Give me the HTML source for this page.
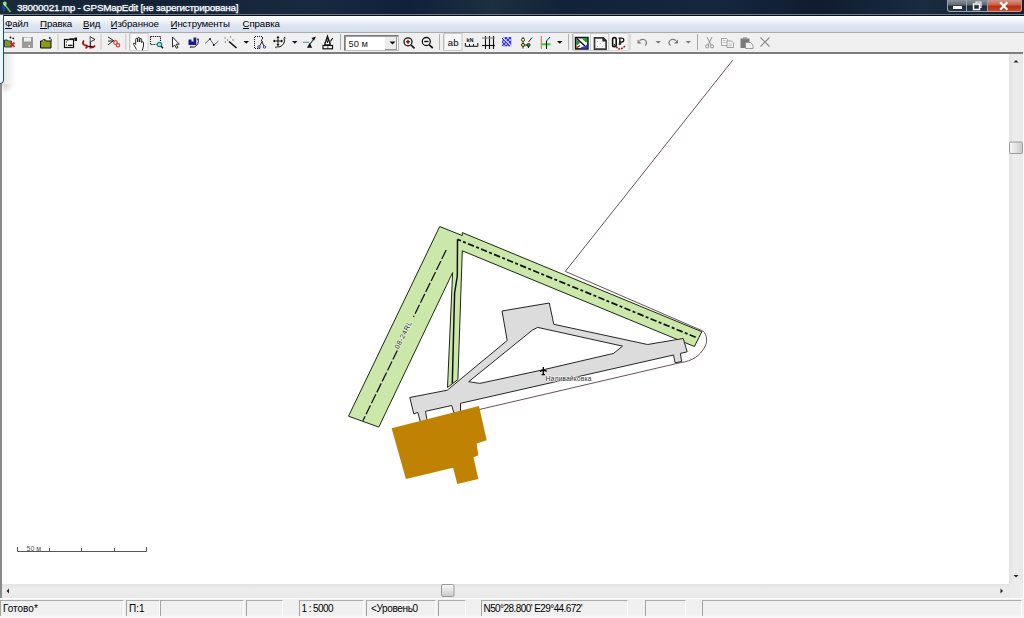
<!DOCTYPE html>
<html><head><meta charset="utf-8">
<style>
html,body{margin:0;padding:0;width:1024px;height:618px;overflow:hidden;background:#fff;font-family:"Liberation Sans",sans-serif;}
.a{position:absolute;}
#title{left:0;top:0;width:1024px;height:14px;background:linear-gradient(100deg,#1a2a3a 0%,#142234 15%,#182a40 30%,#12203a 40%,#1c3040 48%,#132238 55%,#16263c 70%,#101c30 80%,#1a2c40 90%,#121e30 100%);}
#ttext{left:17px;top:1.5px;-webkit-text-stroke:0.25px #fff;text-shadow:0 0 3px rgba(180,210,255,0.35);font-size:9.9px;letter-spacing:-0.22px;color:#fff;white-space:nowrap;}
#menubar{left:0;top:15px;width:1024px;height:16px;background:linear-gradient(#ffffff,#f4f6fb 25%,#dfe6f3 55%,#d4deef);border-top:1px solid #0a0f15;}
.mi{position:absolute;top:2px;font-size:9.7px;letter-spacing:-0.1px;color:#000;white-space:nowrap;}
.mi u{text-decoration:none;border-bottom:1px solid #000;line-height:9px;display:inline-block;}
#toolbar{left:0;top:32px;width:1024px;height:20px;background:#f0f0f0;border-top:1px solid #a8acb2;}
#tbline{left:0;top:52px;width:1023px;height:2px;background:#7d7d7d;}
#map{left:0;top:54px;width:1009px;height:530px;background:#fff;}
#vscroll{left:1009px;top:54px;width:14px;height:530px;background:linear-gradient(90deg,#e3e3e3,#ededed 40%,#e8e8e8);}
#hscroll{left:2px;top:584px;width:1007px;height:14px;background:linear-gradient(#e3e3e3,#ededed 40%,#e8e8e8);}
#corner{left:1009px;top:584px;width:14px;height:14px;background:#ececec;}
#status{left:0;top:598px;width:1024px;height:20px;background:linear-gradient(#f0f0f0 85%,#f7f7f7 90%);border-top:1px solid #fff;box-sizing:border-box;}
.sp{position:absolute;top:1px;height:16px;border-top:1px solid #ababab;border-left:1px solid #a4a4a4;border-right:1px solid #fff;box-sizing:border-box;font-size:10px;color:#000;white-space:nowrap;}
.sp span{position:absolute;left:2px;top:1.5px;}
</style></head><body>
<div class="a" id="title"></div>
<div class="a" id="ttext">38000021.mp - GPSMapEdit [не зарегистрирована]</div>
<div class="a" id="menubar">
 <span class="mi" style="left:5px"><u>Ф</u>айл</span>
 <span class="mi" style="left:40px"><u>П</u>равка</span>
 <span class="mi" style="left:83px"><u>В</u>ид</span>
 <span class="mi" style="left:110.5px"><u>И</u>збранное</span>
 <span class="mi" style="left:170.5px"><u>И</u>нструменты</span>
 <span class="mi" style="left:242.5px"><u>С</u>правка</span>
</div>
<div class="a" id="toolbar"></div>
<div class="a" id="tbline"></div>
<svg class="a" style="left:0;top:0" width="1024" height="54" viewBox="0 0 1024 54">
<!-- separators -->
<g fill="#c4c4c4"><rect x="57.5" y="34" width="1" height="16"/><rect x="100.5" y="34" width="1" height="16"/><rect x="125" y="34" width="1.5" height="16" fill="#d4d4d4"/><rect x="129" y="34" width="1.5" height="16" fill="#b8b8b8"/>
<rect x="340" y="34" width="1" height="16" fill="#a8a8a8"/><rect x="439" y="34" width="1" height="16" fill="#b0b0b0"/><rect x="443" y="34" width="1" height="16" fill="#b0b0b0"/>
<rect x="568" y="34" width="1" height="16" fill="#b0b0b0"/><rect x="572" y="34" width="1" height="16" fill="#b8b8b8"/><rect x="629.5" y="34" width="1" height="16"/><rect x="697" y="34" width="1" height="16" fill="#a8a8a8"/></g>
<!-- pressed buttons -->
<rect x="444" y="33.5" width="18" height="17" fill="#f7f7f7" stroke="#c8c8c8" stroke-width="1"/>
<rect x="130" y="33.5" width="18" height="17" fill="#f8f8f8" stroke="#d0d0d0" stroke-width="1"/>
<rect x="573.5" y="33.5" width="17" height="17" fill="#f7f7f7" stroke="#d0d0d0" stroke-width="1"/>
<rect x="590.5" y="33.5" width="18" height="17" fill="#f7f7f7" stroke="#c8c8c8" stroke-width="1"/>
<rect x="609" y="33.5" width="19" height="17" fill="#f7f7f7" stroke="#d8d8d8" stroke-width="1"/>
<!-- 1 folder with red X -->
<path d="M4.5,40 h3 l1,1 h3 v6 h-7 z" fill="#7a9a30" stroke="#222" stroke-width="0.8"/>
<path d="M10.5,42.5 l4,4.5 M14.5,42.5 l-4,4.5" stroke="#d81818" stroke-width="1.8"/>
<circle cx="10.5" cy="37.5" r="0.9" fill="#111"/><circle cx="13.3" cy="38.3" r="0.9" fill="#111"/>
<!-- 2 floppy gray -->
<rect x="22" y="37" width="11" height="11" fill="#9a9a9a"/><rect x="24" y="37.5" width="7" height="4" fill="#f0f0f0"/><rect x="28.5" y="45" width="1.5" height="2" fill="#eee"/>
<!-- 3 olive folder -->
<path d="M40.5,41 h2 l1,-1.3 h1.8 l1,1.3 h4.7 v7 h-10.5 z" fill="#8c9a18" stroke="#111" stroke-width="1"/>
<path d="M42,40.6 q1.5,-2.2 3,0" fill="#fff" stroke="#111" stroke-width="0.8"/>
<circle cx="49.8" cy="38" r="1" fill="#1a2a8a"/><circle cx="51.3" cy="40" r="0.8" fill="#111"/>
<!-- 4 window props -->
<rect x="64.5" y="39.5" width="9" height="8" fill="#fff" stroke="#111" stroke-width="1.2"/>
<path d="M66,42 h1 M66,45 h1 M68,45.3 h4.5" stroke="#111" stroke-width="1.2"/><path d="M67,41 l3,-2.5 h6" stroke="#444" stroke-width="0.9" fill="none"/>
<rect x="74.5" y="37.5" width="2.5" height="3.5" fill="#111"/>
<!-- 5 red arrows flag -->
<path d="M84,40.5 q-2.5,3 0.5,4.5 l2.5,0.8 q0.5,1.5 -1.5,2.5 M89.5,47.5 q4,0.5 5.5,-2" fill="none" stroke="#a81010" stroke-width="1.8"/>
<path d="M90.3,36.5 v9.5" stroke="#111" stroke-width="1.1"/><path d="M90.5,37 l4.5,2.5 l-4.5,2.2" fill="#fff" stroke="#111" stroke-width="0.9"/>
<path d="M88,46.5 h4.5" stroke="#111" stroke-width="1.2"/>
<!-- 6 -->
<path d="M108,37 l5.5,3.5 l-5.5,4.5 M108,41 h6" fill="none" stroke="#111" stroke-width="0.9"/>
<circle cx="115.5" cy="42.5" r="1.8" fill="none" stroke="#e04040" stroke-width="1.2"/><circle cx="118" cy="45.3" r="1.7" fill="none" stroke="#e04040" stroke-width="1.2"/>
<!-- 7 hand -->
<path d="M136.5,49.5 l-2.8,-5 q-0.8,-1.5 0.7,-1.5 l1.3,1.5 v-5 q0,-1.2 1,-1.2 q1,0 1,1.2 v2.5 v-3.5 q0,-1.2 1,-1.2 q1,0 1,1.2 v3.5 v-2.5 q0,-1 1,-1 q1,0 1,1 v3 q0,-0.8 0.9,-0.8 q0.9,0 0.9,0.8 v3.5 l-1.3,4.5" fill="#fff" stroke="#111" stroke-width="0.9"/>
<!-- 8 dotted rect + magnifier -->
<path d="M150.5,36.5 h10 v5.5 M150.5,36.5 v8 h6" fill="none" stroke="#000" stroke-width="1.1" stroke-dasharray="1.2 1"/>
<circle cx="159.5" cy="44.5" r="2.2" fill="#9ee" stroke="#1a8a8a" stroke-width="1.2"/><path d="M161,46 l2,2.2" stroke="#111" stroke-width="1.4"/>
<!-- 9 arrow cursor -->
<path d="M172.5,37 v10 l2.2,-2 l1.8,3.3 l1.5,-0.8 l-1.8,-3.2 l3,-0.2 z" fill="#fff" stroke="#111" stroke-width="0.9"/>
<!-- 10 blue shape + arrow -->
<path d="M188.5,39.5 h3 v2 h2 v-4 h2.8 v7.5 h-7.8 z" fill="#1a1a8a"/>
<path d="M198,39 q1.5,5 -3.5,8 h-3.5" fill="none" stroke="#111" stroke-width="1"/><path d="M197,39.5 l1,-1.5 l1,1.8 z M191,46 l-1.5,1 l1.5,1 z" fill="#111"/>
<!-- 11 zigzag -->
<path d="M205,43.5 L210,39 L214,45 L218.5,41" fill="none" stroke="#555" stroke-width="0.9"/><circle cx="210" cy="39" r="0.9" fill="#111"/><circle cx="213.8" cy="45" r="1" fill="#111"/>
<!-- 12 magic wand -->
<path d="M229,41.5 L236.5,48" stroke="#111" stroke-width="1.6"/>
<g fill="#666"><circle cx="225" cy="38" r="0.7"/><circle cx="230.5" cy="37" r="0.7"/><circle cx="233" cy="40" r="0.7"/><circle cx="225.5" cy="42" r="0.7"/><circle cx="227.5" cy="40" r="0.7"/></g>
<!-- dropdowns -->
<g fill="#111"><path d="M243.5,41 h5.5 l-2.75,2.8 z"/><path d="M292,41 h5.5 l-2.75,2.8 z"/><path d="M557,41 h5.5 l-2.75,2.8 z"/></g>
<g fill="#777"><path d="M655.5,41 h5.5 l-2.75,2.5 z"/><path d="M685.5,41 h5.5 l-2.75,2.5 z"/></g>
<!-- 14 dotted bracket scissors -->
<path d="M262,36.5 H254.5 V48.5 H261" fill="none" stroke="#111" stroke-width="1" stroke-dasharray="1 1"/>
<path d="M262.5,37 v2 q-1.5,0.5 -1,2 q0.5,1.3 1.5,0.5 M262,42 l-2.5,4 M262,42 l2,4" fill="none" stroke="#111" stroke-width="0.9"/>
<circle cx="259" cy="47" r="1.2" fill="none" stroke="#3a3aa0" stroke-width="1"/><circle cx="264.5" cy="47" r="1.2" fill="none" stroke="#3a3aa0" stroke-width="1"/>
<!-- 15 move rotate -->
<path d="M273.5,41 h9 M278,36.5 v9" stroke="#111" stroke-width="1"/><path d="M273,41 l2,-1.5 v3 z M283,41 l-2,-1.5 v3 z M278,36 l-1.5,2 h3 z M278,46 l-1.5,-2 h3 z" fill="#111"/>
<path d="M284,38.5 q2,5 -4,8.3 h-3" fill="none" stroke="#111" stroke-width="1"/><path d="M283.5,38 l1.5,-1.5 l0.5,2.2 z M276.5,46 v2.5 l-1.5,-1.2 z" fill="#111"/>
<!-- 17 -->
<path d="M303,42.3 h6" stroke="#7890a8" stroke-width="1.2"/><path d="M309.5,45 L314,38.5" stroke="#2a5a3a" stroke-width="1.3"/>
<path d="M316,36.5 l-4.5,1.5 l2.5,2.8 z" fill="#111"/><path d="M309.6,43 l-2.6,4.8 h5.2 z" fill="#111"/>
<!-- 18 A ruler -->
<path d="M325,45 q-0.5,-2 0.8,-3.5 l1.7,-5 l1.7,5 q1.3,1.5 0.8,3.5 z" fill="#fff" stroke="#111" stroke-width="1.5"/><path d="M327.5,40.5 v2.5" stroke="#111" stroke-width="1"/><path d="M330.5,41.5 q1,-2.5 2.5,-3.3" fill="none" stroke="#111" stroke-width="1.1"/>
<rect x="323" y="45.5" width="9.5" height="3.3" fill="#fff" stroke="#111" stroke-width="1.2"/><path d="M327.8,46.5 v2" stroke="#111" stroke-width="0.8"/>
<!-- 20 zoom in -->
<circle cx="408" cy="41.8" r="4" fill="#fff" stroke="#111" stroke-width="1.3"/><path d="M406,41.8 h4 M408,39.8 v4" stroke="#8a1010" stroke-width="1.5"/><path d="M411,45 l3.5,3.3" stroke="#111" stroke-width="1.7"/>
<!-- 21 zoom out -->
<circle cx="426.3" cy="41.5" r="4" fill="#fff" stroke="#111" stroke-width="1.3"/><path d="M424.2,41.5 h4.3" stroke="#111" stroke-width="1.5"/><path d="M429.3,44.8 l3.5,3.3" stroke="#111" stroke-width="1.7"/>
<!-- 22 ab -->
<text x="447.8" y="46.2" font-size="9.6" font-family="Liberation Sans" fill="#000">ab</text>
<!-- 23 kN ruler -->
<text x="466.5" y="42.3" font-size="5.5" font-weight="bold" font-family="Liberation Sans" fill="#111">kN</text>
<path d="M465.3,43 v3.3 h12.5 v-3.3 M469.5,44 v2 M473.5,44 v2" fill="none" stroke="#111" stroke-width="1"/>
<!-- 24 grid -->
<path d="M485.5,36 v13 M489.5,36 v13 M493.5,36 v13" stroke="#111" stroke-width="1.1"/><path d="M482,38 h13" stroke="#888" stroke-width="1.2"/><path d="M482,45.5 h13" stroke="#111" stroke-width="1.1"/>
<!-- 25 blue hatch -->
<defs><pattern id="hp" width="2" height="2" patternUnits="userSpaceOnUse"><rect width="2" height="2" fill="#2a2ae0"/><rect width="1" height="1" fill="#dde"/></pattern></defs>
<clipPath id="hc"><path d="M502,37 h9.5 v9.5 h-9.5 z"/></clipPath><g clip-path="url(#hc)"><rect x="502" y="37" width="9.5" height="9.5" fill="#3636e8"/><path d="M500,38 l10,10 M502,36 l10,10 M504,34 l10,10 M498,40 l10,10 M500,46 l10,-10 M497,45 l10,-10 M503,47 l10,-10" stroke="#d8d8ff" stroke-width="0.7"/></g><path d="M502,37 l9.5,9.5" stroke="#f0f0f0" stroke-width="0.9"/>
<!-- 26 nodes -->
<path d="M523,37 v11.5 M523.2,45 h5.5 M528.5,45 v3 M528.5,42 l3.5,-4.5" stroke="#111" stroke-width="0.9" fill="none"/>
<circle cx="523" cy="39.8" r="1.6" fill="#ffffb0" stroke="#111" stroke-width="0.8"/><circle cx="523" cy="45" r="1.6" fill="#e8e020" stroke="#111" stroke-width="0.8"/><circle cx="528.5" cy="45" r="1.6" fill="#20a020" stroke="#111" stroke-width="0.8"/>
<!-- 27 -->
<path d="M541.3,36 v13" stroke="#d06060" stroke-width="1"/><path d="M541.5,44.3 h9" stroke="#20e020" stroke-width="2"/><path d="M546.5,41 l3.5,-4" stroke="#1a2aa0" stroke-width="1"/><path d="M546.5,41 v8" stroke="#111" stroke-width="1.1"/>
<!-- 29 map icon -->
<rect x="575.6" y="37.6" width="12.3" height="11.3" fill="#fff" stroke="#111" stroke-width="1.6"/>
<path d="M576.3,39.5 l3.8,3.2 l-3.8,3.3 z" fill="#1e8a2a"/><path d="M581.5,38.2 h5.8 v4.5 l-2.5,-1.2 z" fill="#1e9a2a"/>
<path d="M576.8,38.5 l9.5,8.8" stroke="#111" stroke-width="1.4"/>
<path d="M580,48.5 q2,-2.5 4,-2 q2,0.2 3.3,-3 v5 z" fill="#2a3acc"/><path d="M576.5,47.5 q2,-0.5 3.5,-2" stroke="#b01010" stroke-width="1.3" fill="none"/>
<!-- 30 page -->
<path d="M594.5,37.8 h8.8 l2.8,2.8 v8.6 h-11.6 z" fill="#f6f6f6" stroke="#3a3a3a" stroke-width="1.7"/><path d="M603,38 v3 h3" fill="#222" stroke="#222" stroke-width="1.2"/>
<g fill="#bbb"><rect x="597" y="41" width="1" height="1"/><rect x="600" y="43" width="1" height="1"/><rect x="597" y="46" width="1" height="1"/><rect x="602" y="46" width="1" height="1"/></g>
<!-- 31 0P -->
<rect x="612.6" y="37.6" width="3.6" height="9" rx="1.7" fill="#fff" stroke="#111" stroke-width="1.6"/><circle cx="614.4" cy="44.8" r="0.7" fill="#111"/>
<path d="M619.8,38.2 v5.8 M618.6,44 h2.6 M618.6,38.2 h3 q2.2,0 2.2,1.9 q0,1.9 -2.2,1.9 h-1.8" fill="none" stroke="#111" stroke-width="1.3"/>
<path d="M616.5,46.5 q1,2.8 4,2.3 q2.5,-0.5 4.5,-2.8" fill="none" stroke="#9a1818" stroke-width="1.6" stroke-dasharray="1.8 1"/>
<!-- undo redo -->
<path d="M639.5,40.5 q4,-2.5 6.5,0.5 q1.5,2.5 -1,4.5" fill="none" stroke="#7a7a7a" stroke-width="1.1"/><path d="M637.5,39.5 v4 h4 z" fill="#7a7a7a"/>
<path d="M676,40.5 q-4,-2.5 -6.5,0.5 q-1.5,2.5 1,4.5" fill="none" stroke="#7a7a7a" stroke-width="1.1"/><path d="M678,39.5 v4 h-4 z" fill="#7a7a7a"/>
<!-- scissors gray -->
<path d="M707,37 l4,8 M712,37 l-4,8" stroke="#888" stroke-width="0.9"/><circle cx="707.2" cy="46.3" r="1.6" fill="none" stroke="#888" stroke-width="0.9"/><circle cx="712" cy="46.3" r="1.6" fill="none" stroke="#888" stroke-width="0.9"/>
<!-- copy -->
<path d="M721.5,38.5 h5 l1,1 v6 h-6 z" fill="#f4f4f4" stroke="#999" stroke-width="0.9"/><path d="M727,41 h4.5 l2,2 v4.5 h-6.5 z" fill="#f4f4f4" stroke="#999" stroke-width="0.9"/>
<path d="M722.8,40.5 h3 M722.8,42.5 h3 M728.5,44 h3 M728.5,45.8 h3" stroke="#aaa" stroke-width="0.7"/>
<!-- paste -->
<rect x="740.5" y="38.5" width="9" height="9.5" fill="#7a7a7a"/><rect x="743" y="37.3" width="4" height="2" fill="#999"/><path d="M745.5,42.5 h5 l2.5,2.5 v3.5 h-7.5 z" fill="#f0f0f0" stroke="#888" stroke-width="0.8"/>
<!-- X delete -->
<path d="M760.5,37.5 l9,9 M769.5,37.5 l-9,9" stroke="#888" stroke-width="1.1"/>
</svg>
<!-- combo box -->
<div class="a" style="left:344px;top:35px;width:55px;height:16px;box-sizing:border-box;border:1px solid #7a7a7a;border-right-color:#bbb;border-bottom-color:#bbb;background:#fff;box-shadow:inset 1px 1px 0 #a0a0a0"></div>
<div class="a" style="left:385px;top:37px;width:12px;height:13px;background:#ececec;border-right:1px solid #999;border-bottom:1px solid #999;box-sizing:border-box"></div>
<svg class="a" style="left:389px;top:41px" width="8" height="4"><path d="M0.5,0.5 h6 l-3,3 z" fill="#111"/></svg>
<div class="a" style="left:348.5px;top:38.5px;font-size:9.3px;color:#222;white-space:nowrap">50 м</div>

<div class="a" id="map"></div>
<svg class="a" style="left:0;top:0" width="1009" height="584" viewBox="0 0 1009 584">
<defs><clipPath id="mc"><rect x="2" y="54" width="1007" height="530"/></clipPath></defs>
<g clip-path="url(#mc)">
<path d="M732.7,60.2 L565.3,271.4 L702.9,331 C707.5,335 707.5,343 704.7,347 C700,356 692,361 680.7,362.6 L430,421" fill="none" stroke="#685457" stroke-width="1"/>
<path d="M439.7,226.5 L462.3,235.6 L462.3,232.6 L701.8,331.7 L694.4,346.5 L462.3,250.8 L457.9,379.6 L447.5,387.4 L452.6,272.6 L378.8,427.1 L348.5,416.2 Z" fill="#cbe8aa" stroke="#1a2814" stroke-width="1"/>
<path d="M446.2,250 L413.5,317 M397.3,350.5 L362.9,420.8" fill="none" stroke="#111" stroke-width="1.25" stroke-dasharray="10 2.2"/>
<path d="M452.3,383.5 L454.6,293 L457.3,276 L457.5,239.4" fill="none" stroke="#111" stroke-width="1.5"/>
<path d="M457.5,239.4 L696.7,337.7" fill="none" stroke="#111" stroke-width="1.75" stroke-dasharray="6.5 2.3 3 2.3" stroke-dashoffset="2.8"/>
<path d="M409.8,397.5 L447.3,390.2 L507.2,340.5 L502,311 L549.3,303 L553.8,324.3 L647.6,344.5 L683.2,338.5 L687.2,351.8 L680.4,353.4 L681.6,361.5 L675.1,362.8 L673.5,355 L460.5,403.3 L460.5,412 L453.9,413 L451.7,405.5 L425.5,411.3 L427.3,422 L420.4,422 L417.8,412.4 L413.8,413.9 Z M532.5,330 L537.7,327.4 L622.5,346.1 L613.6,353.4 L544,369.6 L479.8,383.4 L468.7,381.7 Z" fill="#dcdcdc" fill-rule="evenodd" stroke="#1a1a1a" stroke-width="0.95"/>
<path d="M391.6,428.2 L479,406 L486.7,440.3 L476.7,443.5 L478.3,455.6 L473.5,457.3 L478.3,479.1 L457.3,484 L453.1,467.8 L405.9,479.1 Z" fill="#c08202"/>
<text x="545.5" y="380.6" font-size="7" fill="#333" stroke="#fff" stroke-width="1.2" stroke-opacity="0.75" paint-order="stroke" textLength="46" font-family="Liberation Sans">Наливайковка</text>
<path d="M543.3,367 V374.7 M539.9,371.4 L543.3,369.8 L546.7,371.4 M541.6,374.6 H545" fill="none" stroke="#000" stroke-width="1.3"/>
<text transform="translate(398.5,349.5) rotate(-63)" font-size="7" letter-spacing="0.5" fill="#333" stroke="#e4f2d8" stroke-width="1.4" paint-order="stroke" font-family="Liberation Sans">08-24RL</text>
<g stroke="#555" stroke-width="1" fill="none"><path d="M17.5,547 V551.5 H146.5 V547 M49.5,548 V551 M81.5,548 V551 M114.5,548 V551"/></g>
<text x="26.5" y="551" font-size="7" fill="#555" font-family="Liberation Sans">50 м</text>
</g></svg>

<div class="a" id="vscroll"></div>
<div class="a" id="hscroll"></div>
<div class="a" id="corner"></div>
<!-- title bar lines -->
<div class="a" style="left:0;top:14px;width:1024px;height:1px;background:#6a7a88"></div>
<svg class="a" style="left:0;top:0" width="16" height="15" viewBox="0 0 16 15">
<path d="M2.5,3 q1,-2 3,-1.5 q2,1 1,3 l-1.5,1.5 z" fill="#8be07a"/>
<path d="M2,5 q0,3 1,7 l2,-1 q-0.5,-3 0.5,-5 z" fill="#2040a0"/>
<path d="M5,5 L10.5,12" stroke="#6abe6a" stroke-width="1.6"/>
<path d="M3.5,4 q1.5,0.5 2,2" stroke="#cfffaa" stroke-width="1.2" fill="none"/>
</svg>
<!-- window buttons -->
<div class="a" style="left:947px;top:0;width:20px;height:12px;box-sizing:border-box;border:1px solid #9aa4ae;border-top:none;border-radius:0 0 0 3px;background:linear-gradient(#8a939c,#5d6873 45%,#1e2a36 55%,#2a3a48)"></div>
<div class="a" style="left:967px;top:0;width:21px;height:12px;box-sizing:border-box;border:1px solid #9aa4ae;border-top:none;border-left:none;background:linear-gradient(#8a939c,#5d6873 45%,#1e2a36 55%,#2a3a48)"></div>
<div class="a" style="left:988px;top:0;width:34px;height:12px;box-sizing:border-box;border:1px solid #c09a96;border-top:none;border-left:none;border-radius:0 0 3px 0;background:linear-gradient(#d4948a,#c8604a 45%,#b82c10 55%,#c84a2a)"></div>
<div class="a" style="left:953px;top:6px;width:9px;height:2.5px;background:#f4f4f4;box-shadow:0 0 1px #000"></div>
<svg class="a" style="left:972px;top:1px" width="12" height="10"><rect x="1.5" y="3" width="6" height="5.5" fill="none" stroke="#f4f4f4" stroke-width="1.5"/><path d="M4,2.5 V1 h5 v5.5 h-1" fill="none" stroke="#f4f4f4" stroke-width="1.2"/></svg>
<svg class="a" style="left:998px;top:1px" width="12" height="10"><path d="M2.2,1.2 L9.3,8.8 M9.3,1.2 L2.2,8.8" stroke="#fff" stroke-width="2.2"/></svg>
<!-- left edge panel -->
<div class="a" style="left:0;top:15px;width:3px;height:68px;background:#eef8fc;border-right:1.5px solid #185070;border-bottom:1.5px solid #185070;border-radius:0 0 4px 0"></div>
<div class="a" style="left:0;top:84px;width:2px;height:514px;background:#8a8a8a"></div>
<div class="a" style="left:4px;top:54px;width:12px;height:42px;background:linear-gradient(90deg,rgba(0,0,0,0.10),rgba(0,0,0,0));-webkit-mask-image:linear-gradient(#000 60%,transparent)"></div>
<div class="a" style="left:2px;top:84px;width:12px;height:10px;background:radial-gradient(ellipse at 0% 0%,rgba(0,0,0,0.12),rgba(0,0,0,0) 70%)"></div>
<!-- scrollbar parts -->
<svg class="a" style="left:1009px;top:54px" width="14" height="530">
<path d="M4.5,8.5 l2.5,-2.5 l2.5,2.5 z" fill="#222"/>
<path d="M4.5,521 l2.5,2.5 l2.5,-2.5 z" fill="#222"/>
<rect x="0.5" y="88" width="13" height="11.5" rx="1.5" fill="url(#thg)" stroke="#9a9a9a"/>
<defs><linearGradient id="thg" x1="0" x2="1"><stop offset="0" stop-color="#f8f8f8"/><stop offset="0.5" stop-color="#e2e2e2"/><stop offset="1" stop-color="#c8c8c8"/></linearGradient>
<linearGradient id="thh" x1="0" x2="0" y1="0" y2="1"><stop offset="0" stop-color="#f8f8f8"/><stop offset="0.5" stop-color="#e2e2e2"/><stop offset="1" stop-color="#c8c8c8"/></linearGradient></defs>
</svg>
<svg class="a" style="left:0;top:584px" width="1009" height="14">
<path d="M9,4.5 l-2.5,2.5 l2.5,2.5 z" fill="#222"/>
<path d="M1000.5,4.5 l2.5,2.5 l-2.5,2.5 z" fill="#222"/>
<rect x="441.5" y="0.5" width="12.5" height="12" rx="1.5" fill="url(#thh)" stroke="#9a9a9a"/>
</svg>
<div class="a" id="status">
 <div class="sp" style="left:0px;width:124px"><span>Готово*</span></div>
 <div class="sp" style="left:126px;width:34px"><span>П:1</span></div>
 <div class="sp" style="left:160px;width:84px"></div>
 <div class="sp" style="left:246px;width:37px"></div>
 <div class="sp" style="left:299px;width:65px"><span style="letter-spacing:-0.6px;left:1.5px">1 : 5000</span></div>
 <div class="sp" style="left:366px;width:70px"><span style="letter-spacing:-0.35px;left:4px">&lt;Уровень0</span></div>
 <div class="sp" style="left:438px;width:28px"></div>
 <div class="sp" style="left:481px;width:147px"><span style="letter-spacing:-0.58px;left:1.5px">N50°28.800' E29°44.672'</span></div>
 <div class="sp" style="left:645px;width:41px"></div>
 <div class="sp" style="left:702px;width:320px"></div>
</div>
</body></html>
